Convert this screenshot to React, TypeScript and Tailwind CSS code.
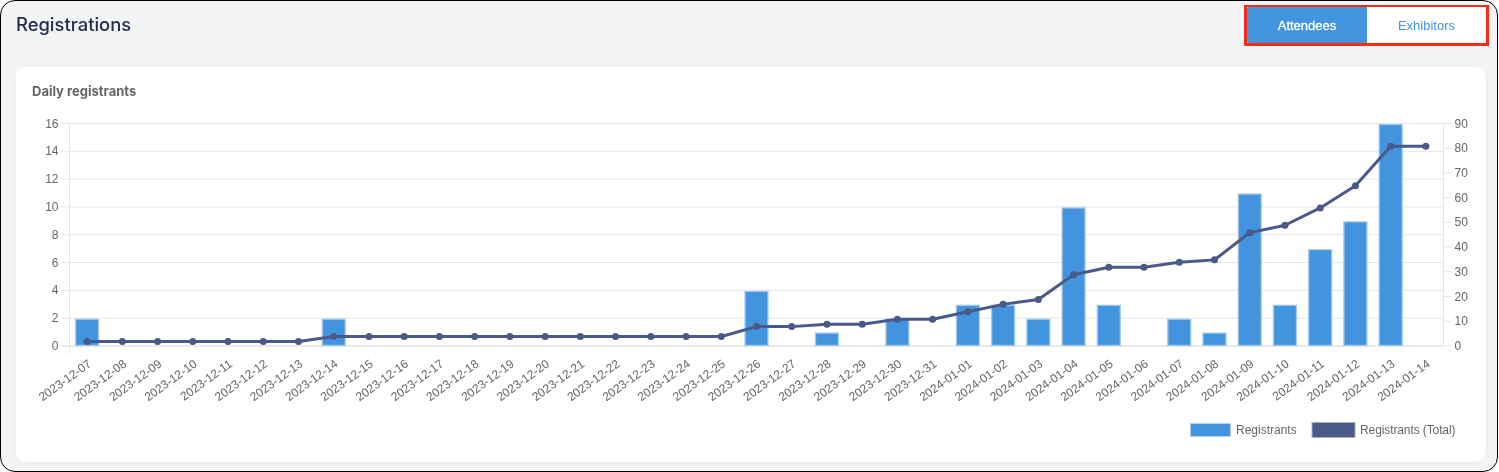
const dates = [
  "2023-12-07","2023-12-08","2023-12-09","2023-12-10","2023-12-11","2023-12-12","2023-12-13","2023-12-14","2023-12-15","2023-12-16",
  "2023-12-17","2023-12-18","2023-12-19","2023-12-20","2023-12-21","2023-12-22","2023-12-23","2023-12-24","2023-12-25","2023-12-26",
  "2023-12-27","2023-12-28","2023-12-29","2023-12-30","2023-12-31","2024-01-01","2024-01-02","2024-01-03","2024-01-04","2024-01-05",
  "2024-01-06","2024-01-07","2024-01-08","2024-01-09","2024-01-10","2024-01-11","2024-01-12","2024-01-13","2024-01-14",
];
const bars = [2,0,0,0,0,0,0,2,0,0,0,0,0,0,0,0,0,0,0,4,0,1,0,2,0,3,3,2,10,3,0,2,1,11,3,7,9,16,0];
const total = [2,2,2,2,2,2,2,4,4,4,4,4,4,4,4,4,4,4,4,8,8,9,9,11,11,14,17,19,29,32,32,34,35,46,49,56,65,81,81];

const L = 53.5, R = 1427.5, T = 16.5, B = 239;
const W = 1470, H = 355;
const step = (R - L) / 39;
const cx = (i: number) => L + step * (i + 0.5);
const yL = (v: number) => B - (v / 16) * (B - T);
const yR = (v: number) => B - (v / 90) * (B - T) + 0.4;
const leftTicks = [0, 2, 4, 6, 8, 10, 12, 14, 16];
const rightTicks = [0, 10, 20, 30, 40, 50, 60, 70, 80, 90];

function Chart() {
  return (
    <svg width={W} height={H} viewBox={`0 0 ${W} ${H}`} className="block" style={{ fontFamily: '"Liberation Sans", Arial, sans-serif' }}>
      {leftTicks.map((t) => (
        <g key={t}>
          <line x1={L - 8} x2={R} y1={yL(t)} y2={yL(t)} stroke={t === 0 ? "#d4d4d4" : "#e6e6e6"} />
          <text x={L - 11} y={yL(t) + 4} textAnchor="end" fontSize="12" fill="#666666">{t}</text>
        </g>
      ))}
      <line x1={L} x2={L} y1={T} y2={B + 8} stroke="#e6e6e6" />
      <line x1={R} x2={R} y1={T} y2={B} stroke="#e6e6e6" />
      {rightTicks.map((t) => (
        <g key={t}>
          <line x1={R} x2={R + 8} y1={yR(t) - 0.4} y2={yR(t) - 0.4} stroke="#e6e6e6" />
          <text x={R + 11} y={yR(t) + 3.6} fontSize="12" fill="#666666">{t}</text>
        </g>
      ))}
      {dates.map((d, i) => (
        <text key={d} x={cx(i) + 5} y={B + 19.5} textAnchor="end" fontSize="12" fill="#666666" transform={`rotate(-36 ${cx(i) + 5} ${B + 19.5})`}>{d}</text>
      ))}
      {bars.map((v, i) =>
        v > 0 ? (
          <rect key={i} x={cx(i) - 11.5} y={yL(v) + 1} width={23} height={B - yL(v) - 1.5} fill="#4394de" stroke="#a9c9ea" strokeWidth="1.3" />
        ) : null
      )}
      <polyline points={total.map((v, i) => `${cx(i)},${yR(v)}`).join(" ")} fill="none" stroke="#495a8a" strokeWidth="3" strokeLinejoin="round" />
      {total.map((v, i) => (
        <circle key={i} cx={cx(i)} cy={yR(v)} r="3.5" fill="#495a8a" />
      ))}
      <rect x={1174.5} y={316.5} width={40} height={13} fill="#4394de" stroke="#b4d0ec" />
      <text x={1220} y={327} fontSize="12" fill="#666666">Registrants</text>
      <rect x={1296} y={315.5} width={43} height={15} fill="#495a8a" stroke="#a4aec8" />
      <text x={1344} y={327} fontSize="12" fill="#666666" textLength={95.5} lengthAdjust="spacing">Registrants (Total)</text>
    </svg>
  );
}

export default function App() {
  return (
    <div className="h-[472px] w-[1499px] overflow-hidden will-change-transform">
      <div className="flex h-[472px] w-[1498px] flex-col rounded-[15px] border border-black bg-[#f3f4f6] pl-[15px]">
        <div className="flex h-[66px] w-[1473px] shrink-0 items-start justify-between">
          <h1 className="pt-[13px] text-[18.4px] leading-[20px] font-medium text-[#232b52]" style={{ fontFamily: "Inter, sans-serif" }}>Registrations</h1>
          <div className="mt-[4px] flex h-[41px] w-[245px] border-x-[3px] border-t-[2px] border-b-[3px] border-[#fb2a12] bg-white pt-[1px] text-[13px]" style={{ fontFamily: '"Liberation Sans", Arial, sans-serif' }}>
            <div className="-mt-[1px] flex w-[120px] items-center justify-center rounded-l-[2px] bg-[#4394de] pt-[1px] font-medium text-white [-webkit-text-stroke:0.3px_white]">Attendees</div>
            <div className="flex flex-1 items-center justify-center text-[#4394de]">Exhibitors</div>
          </div>
        </div>
        <div className="flex h-[395px] w-[1470px] flex-col rounded-[10px] bg-white shadow-[0_2px_10px_rgba(0,0,0,0.03)]">
          <div className="h-[40px] shrink-0 pt-[16px] pl-[16px] text-[13px] leading-[16px] font-bold text-[#666666]" style={{ fontFamily: "Inter, sans-serif" }}>Daily registrants</div>
          <Chart />
        </div>
      </div>
    </div>
  );
}
